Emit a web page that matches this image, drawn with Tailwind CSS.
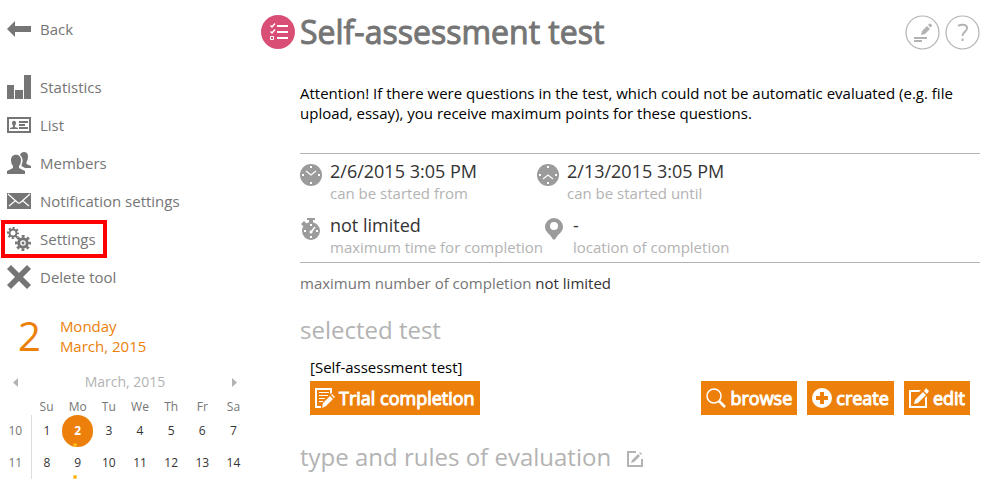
<!DOCTYPE html>
<html lang="en">

<head>
    <meta charset="UTF-8">
    <meta name="viewport" content="width=device-width, initial-scale=1.0">
    <title>Self-assessment test</title>
    <script src="https://cdn.jsdelivr.net/npm/@tailwindcss/browser@4"></script>
</head>

<body class="bg-white font-['Open_Sans',sans-serif] text-[15px] leading-5 text-black">
    <div class="flex">
        <!-- Sidebar -->
        <aside class="w-[261px] shrink-0 text-[#757575]">
            <nav class="pt-[10px]">
                <a href="#" class="flex h-[38px] items-center gap-[9px] pl-[7px]">
                    <svg class="w-6 h-6" viewBox="0 0 24 24" fill="currentColor"><path d="M0 12l8-8v5h16v6H8v5z" /></svg>
                    Back
                </a>
                <ul class="mt-5">
                    <li>
                        <a href="#" class="flex h-[38px] items-center gap-[9px] pl-[7px]">
                            <svg class="w-6 h-6" viewBox="0 0 24 24" fill="currentColor"><path d="M0 10h7v14H0zM8 15h8v9H8zM17 0h7v24h-7z" /></svg>
                            Statistics
                        </a>
                    </li>
                    <li>
                        <a href="#" class="flex h-[38px] items-center gap-[9px] pl-[7px]">
                            <svg class="w-6 h-6" viewBox="0 0 24 24" fill="currentColor">
                                <path fill-rule="evenodd" d="M0 4h24v16H0zM2 6v12h20V6z" />
                                <path d="M5 10c0-3 4-3 4 0 0 1-.5 2-1 2.500V14l3 1v1H3v-1l3-1v-1.500C5.500 12 5 11 5 10zM12 8h9v2h-9zM12 11h6v2h-6zM12 14h9v2h-9z" />
                            </svg>
                            List
                        </a>
                    </li>
                    <li>
                        <a href="#" class="flex h-[38px] items-center gap-[9px] pl-[7px]">
                            <svg class="w-6 h-6" viewBox="0 0 24 24" fill="currentColor">
                                <path d="M4 9c0-7 10-7 10 0 0 3-1 5-2 6v2l6 3v3H0v-3l6-3v-2C5 14 4 12 4 9z" />
                                <path d="M13 4c1-4 8-4 8 1 0 3-.5 4.500-1.500 6v2l4.500 2v2h-6l-3.500-2v-1c1.500-3 2-7-1.500-10z" />
                            </svg>
                            Members
                        </a>
                    </li>
                    <li>
                        <a href="#" class="flex h-[38px] items-center gap-[9px] pl-[7px]">
                            <svg class="w-6 h-6" viewBox="0 0 24 24">
                                <path d="M0 4h24v16H0z" fill="currentColor" />
                                <path d="M1 5l9.500 8.500c1 .7 2 .7 3 0L23 5M2 17l6-5M22 17l-6-5" fill="none" stroke="#fff" stroke-width="1.200" />
                            </svg>
                            Notification settings
                        </a>
                    </li>
                    <li>
                        <a href="#" class="ml-px flex h-[38px] w-[106px] items-center gap-[9px] pl-[6px] outline-4 -outline-offset-4 outline-[#f00]">
                            <svg class="w-6 h-6" viewBox="0 0 24 24" fill="none" stroke="currentColor">
                                <circle cx="6" cy="6" r="3.500" stroke-width="2" />
                                <circle cx="6" cy="6" r="5" stroke-width="2.200" stroke-dasharray="2 1.930" stroke-dashoffset="1" />
                                <circle cx="16" cy="16" r="4.300" stroke-width="3" />
                                <circle cx="16" cy="16" r="6.700" stroke-width="2.600" stroke-dasharray="2.800 2.460" stroke-dashoffset="1.400" />
                                <circle cx="16" cy="16" r="1.500" fill="currentColor" stroke="none" />
                            </svg>
                            Settings
                        </a>
                    </li>
                    <li>
                        <a href="#" class="flex h-[38px] items-center gap-[9px] pl-[7px]">
                            <svg class="w-6 h-6" viewBox="0 0 24 24" fill="currentColor"><path d="M4 0l8 8 8-8 4 4-8 8 8 8-4 4-8-8-8 8-4-4 8-8-8-8z" /></svg>
                            Delete tool
                        </a>
                    </li>
                </ul>
            </nav>

            <!-- Calendar -->
            <div class="mt-5 flex h-10 items-center gap-[19px] pl-[18px] text-[#ec800a]">
                <span class="text-[40px] leading-10">2</span>
                <span>Monday<br>March, 2015</span>
            </div>
            <div class="mt-4 flex w-[237px] items-center justify-between pl-[13px] text-[#b3b3b3]">
                <button type="button" aria-label="Previous month"><svg class="block w-[5px] h-[9px]" viewBox="0 0 5 9" fill="currentColor"><path d="M5 0v9L0 4.500z" /></svg></button>
                <span class="text-sm leading-5">March, 2015</span>
                <button type="button" aria-label="Next month"><svg class="block w-[5px] h-[9px]" viewBox="0 0 5 9" fill="currentColor"><path d="M0 0v9l5-4.500z" /></svg></button>
            </div>
            <table class="mt-[7px] w-[249px] table-fixed text-center text-xs text-[#333]">
                <thead>
                    <tr class="h-4 text-[#757575]">
                        <td class="w-[31px]"></td>
                        <th class="font-normal">Su</th>
                        <th class="font-normal">Mo</th>
                        <th class="font-normal">Tu</th>
                        <th class="font-normal">We</th>
                        <th class="font-normal">Th</th>
                        <th class="font-normal">Fr</th>
                        <th class="font-normal">Sa</th>
                    </tr>
                </thead>
                <tbody>
                    <tr class="h-8">
                        <th class="border-r border-[#ddd] font-normal text-[#757575]">10</th>
                        <td>1</td>
                        <td>
                            <span class="relative block h-8 rounded-full bg-[#ec800a] leading-8 font-bold text-white">2<i class="absolute bottom-0 left-[11px] size-1 rounded-full bg-[#fdb913]"></i></span>
                        </td>
                        <td>3</td>
                        <td>4</td>
                        <td>5</td>
                        <td>6</td>
                        <td>7</td>
                    </tr>
                    <tr class="h-8">
                        <th class="border-r border-[#ddd] font-normal text-[#757575]">11</th>
                        <td>8</td>
                        <td>
                            <span class="relative block h-8 leading-8">9<i class="absolute bottom-0 left-[11px] size-1 rounded-full bg-[#fdb913]"></i></span>
                        </td>
                        <td>10</td>
                        <td>11</td>
                        <td>12</td>
                        <td>13</td>
                        <td>14</td>
                    </tr>
                </tbody>
            </table>
        </aside>

        <!-- Content -->
        <main class="min-w-0 flex-1 pr-[11px]">
            <header class="flex items-center gap-[5px] pt-2">
                <svg class="w-[34px] h-[34px] shrink-0" viewBox="0 0 34 34" fill="none" stroke="#fff">
                    <circle cx="17" cy="17" r="17" fill="#d84e74" stroke="none" />
                    <path d="M16 11h11M16 17h11M16 23h11" stroke-width="2" />
                    <path d="M9.500 10.500l1.500 1.500 3-3.500M9.500 16.500l1.500 1.500 3-3.500" stroke-width="1.500" />
                    <path d="M9.500 21.500h3v3h-3z" />
                </svg>
                <h1 class="flex-1 text-[32px] leading-[48px] font-normal text-[#757575] [-webkit-text-stroke:1px_#757575]">Self-assessment test</h1>
                <button type="button" aria-label="Edit description">
                    <svg class="block w-[35px] h-[35px]" viewBox="0 0 35 35" fill="#b3b3b3">
                        <circle cx="17.500" cy="17.500" r="16.500" fill="none" stroke="#b3b3b3" stroke-width="1.200" />
                        <path d="M9 22h13v2H9zM9 25h8v2H9zM16 20l1-4 5-5 3 3-5 5zM23 10l1.500-1.500c1-.5 3 1.500 2.500 2.500L25.500 12.500z" />
                    </svg>
                </button>
                <button type="button" aria-label="Help">
                    <svg class="block w-[35px] h-[35px]" viewBox="0 0 35 35" fill="none" stroke="#b3b3b3">
                        <circle cx="17.500" cy="17.500" r="16.500" stroke-width="1.200" />
                        <path d="M13 11c2-1.500 9-2.500 9 2 0 4-4.500 3.500-4.500 8M17.500 23.500v2.500" stroke-width="2" />
                    </svg>
                </button>
            </header>

            <div class="pl-[39px]">
                <p class="mt-[27px]">Attention! If there were questions in the test, which could not be automatic evaluated (e.g. file upload, essay), you receive maximum points for these questions.</p>

                <div class="mt-[30px] border-y border-[#b3b3b3] pt-[7px] text-[#b3b3b3]">
                    <div class="flex">
                        <div class="flex w-[237px] gap-2">
                            <svg class="mt-[3px] w-[22px] h-[22px]" viewBox="0 0 22 22">
                                <circle cx="11" cy="11" r="11" fill="#9b9b9b" />
                                <path d="M6 7l5 4 5-4" fill="none" stroke="#fff" stroke-width="1.200" />
                                <path d="M10 2h2v2h-2zM10 18h2v2h-2zM2 10h2v2H2zM18 10h2v2h-2z" fill="#fff" />
                            </svg>
                            <div>
                                <p class="text-lg leading-5 text-[#333]">2/6/2015 3:05 PM</p>
                                <p class="leading-6">can be started from</p>
                            </div>
                        </div>
                        <div class="flex gap-2">
                            <svg class="mt-[3px] w-[22px] h-[22px]" viewBox="0 0 22 22">
                                <circle cx="11" cy="11" r="11" fill="#9b9b9b" />
                                <path d="M6 15l5-4 5 4" fill="none" stroke="#fff" stroke-width="1.200" />
                                <path d="M10 2h2v2h-2zM10 18h2v2h-2zM2 10h2v2H2zM18 10h2v2h-2z" fill="#fff" />
                            </svg>
                            <div>
                                <p class="text-lg leading-5 text-[#333]">2/13/2015 3:05 PM</p>
                                <p class="leading-6">can be started until</p>
                            </div>
                        </div>
                    </div>
                    <div class="mt-[10px] flex pb-[3px]">
                        <div class="flex gap-2">
                            <svg class="mt-[3px] w-[22px] h-[22px]" viewBox="0 0 22 22">
                                <circle cx="11" cy="13" r="9" fill="#9b9b9b" />
                                <path d="M7 0h8v2h-2v3H9V2H7zM1 6l3-3 3 3-3 3z" fill="#9b9b9b" />
                                <path d="M10 6h2v2h-2zM10 18h2v2h-2zM4 12h2v2H4zM16 12h2v2h-2z" fill="#fff" />
                                <path d="M11 14l4-5" fill="none" stroke="#fff" stroke-width="1.500" />
                                <circle cx="11" cy="14" r="1.500" fill="#fff" />
                            </svg>
                            <div>
                                <p class="text-lg leading-5 text-[#333]">not limited</p>
                                <p class="leading-6">maximum time for completion</p>
                            </div>
                        </div>
                        <div class="flex gap-2">
                            <svg class="mt-[3px] w-[22px] h-[22px]" viewBox="0 0 22 22">
                                <path fill-rule="evenodd" d="M11 0a9 9 0 0 1 9 9c0 5-5 7-7 11-1 2-3 2-4 0-2-4-7-6-7-11a9 9 0 0 1 9-9zM11 4a4 4 0 1 0 0 8 4 4 0 0 0 0-8z" fill="#9b9b9b" />
                            </svg>
                            <div>
                                <p class="text-lg leading-5 text-[#333]">-</p>
                                <p class="leading-6">location of completion</p>
                            </div>
                        </div>
                    </div>
                </div>

                <p class="mt-[10px] text-[#757575]">maximum number of completion <span class="text-[#333]">not limited</span></p>

                <h2 class="mt-[21px] text-2xl leading-8 font-medium text-[#b3b3b3]">selected test</h2>
                <div class="px-[10px]">
                    <p class="mt-[11px]">[Self-assessment test]</p>
                    <div class="mt-1 flex gap-[10px] text-lg font-normal text-white [-webkit-text-stroke:1px_#fff]">
                        <button type="button" class="flex h-[34px] items-center gap-1 bg-[#ec800a] px-[5px]">
                            <svg class="w-5 h-5" viewBox="0 0 20 20" fill="#fff">
                                <path d="M0 0h17v5l-2 1V2H2v16h4v2H0z" />
                                <path d="M4 4h10v1H4zM4 7h9v1H4zM4 10h6v1H4zM4 13h4v1H4zM8 15l7-7 3 3-7 7-4 2zM16 7l1-1 3 3-1 1z" />
                            </svg>
                            Trial completion
                        </button>
                        <button type="button" class="ml-auto flex h-[34px] items-center gap-1 bg-[#ec800a] px-[5px]">
                            <svg class="w-5 h-5" viewBox="0 0 20 20" fill="none" stroke="#fff"><circle cx="8" cy="8" r="7" stroke-width="1.500" /><path d="M13 13l6 6" stroke-width="2.500" /></svg>
                            browse
                        </button>
                        <button type="button" class="flex h-[34px] items-center gap-1 bg-[#ec800a] px-[5px]">
                            <svg class="w-5 h-5" viewBox="0 0 20 20"><circle cx="10" cy="10" r="10" fill="#fff" /><path d="M8 4h4v4h4v4h-4v4H8v-4H4V8h4z" fill="#ec800a" /></svg>
                            create
                        </button>
                        <button type="button" class="flex h-[34px] items-center gap-1 bg-[#ec800a] px-[5px]">
                            <svg class="w-5 h-5" viewBox="0 0 20 20" fill="#fff"><path d="M0 2h12l-2 2H2v14h14v-8l2-2v12H0zM6 12l8-8 3 3-8 8-4 1zM15 3l2-3 3 3-2 3z" /></svg>
                            edit
                        </button>
                    </div>
                </div>

                <div class="mt-6 flex items-center gap-4 text-[#b3b3b3]">
                    <h2 class="text-2xl leading-9 font-medium">type and rules of evaluation</h2>
                    <button type="button" aria-label="Edit evaluation"><svg class="mt-1 block w-4 h-4" viewBox="0 0 16 16" fill="currentColor"><path d="M0 0h9v2H2v12h12V8h2v8H0zM4 12l1-3 6-6 2 2-6 6zM12 2l1-1 2 2-1 1z" /></svg></button>
                </div>
            </div>
        </main>
    </div>
</body>

</html>
